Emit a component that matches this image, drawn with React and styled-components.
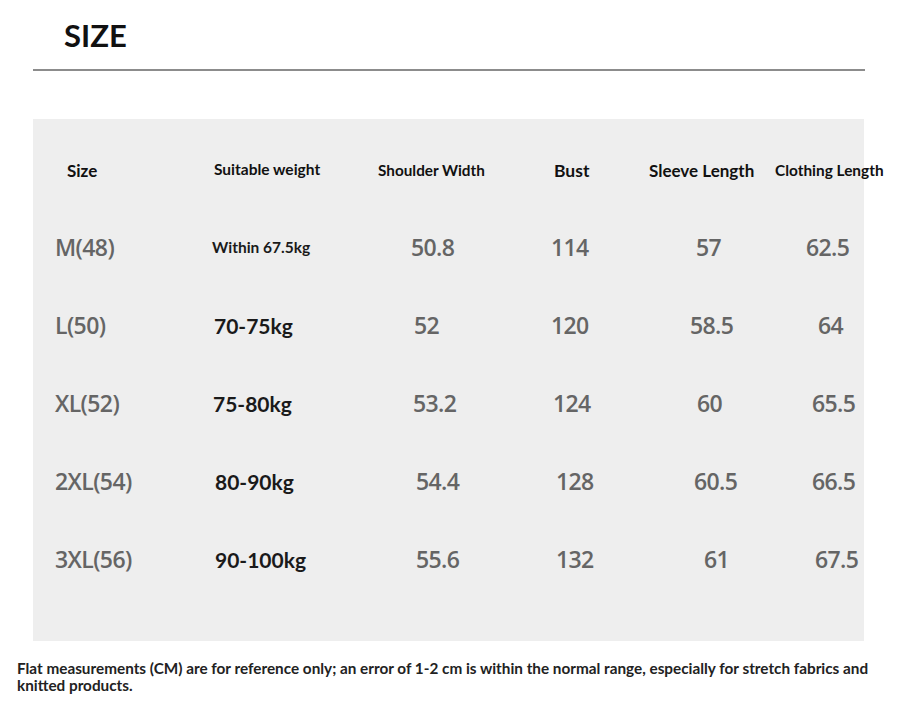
import React from "react";
import styled, {createGlobalStyle} from "styled-components";

const GlobalStyle = createGlobalStyle`
  body {
    margin: 0;
    background: #ffffff;
    font-family: Lato, "Liberation Sans", sans-serif;
  }
`;

const headers = [
    {text: "Size", dx: 34, size: 17},
    {text: "Suitable weight", dx: 24, size: 15.5, dy: -1},
    {text: "Shoulder Width", dx: 8, size: 15.3},
    {text: "Bust", dx: 24, size: 17.5},
    {text: "Sleeve Length", dx: 9, size: 17},
    {text: "Clothing Length", dx: 5, size: 15.4},
];

const rows = [
    {size: "M(48)", weight: "Within 67.5kg", small: true, values: [["50.8", 41], ["114", 21], ["57", 56], ["62.5", 36]], wx: 22},
    {size: "L(50)", weight: "70-75kg", values: [["52", 44], ["120", 21], ["58.5", 50], ["64", 48]], wx: 24},
    {size: "XL(52)", weight: "75-80kg", values: [["53.2", 43], ["124", 23], ["60", 57], ["65.5", 42]], wx: 23},
    {size: "2XL(54)", weight: "80-90kg", values: [["54.4", 46], ["128", 26], ["60.5", 54], ["66.5", 42]], wx: 25},
    {size: "3XL(56)", weight: "90-100kg", values: [["55.6", 46], ["132", 26], ["61", 64], ["67.5", 45]], wx: 25},
];

function App() {
    return (
        <Page>
            <GlobalStyle/>
            <Title>SIZE</Title>
            <Rule/>
            <Panel>
                <HeadRow>
                    {headers.map((h) => (
                        <HeadCell key={h.text} $dx={h.dx} $size={h.size} $dy={h.dy || 0}>{h.text}</HeadCell>
                    ))}
                </HeadRow>
                {rows.map((r) => (
                    <Row key={r.size}>
                        <ValueCell $dx={22}>{r.size}</ValueCell>
                        <WeightCell $dx={r.wx} $small={r.small}>{r.weight}</WeightCell>
                        {r.values.map(([v, dx], i) => (
                            <ValueCell key={i} $dx={dx}>{v}</ValueCell>
                        ))}
                    </Row>
                ))}
            </Panel>
            <Note>
                Flat measurements (CM) are for reference only; an error of 1-2 cm is within the normal range, especially for stretch fabrics and<br/>
                knitted products.
            </Note>
        </Page>
    )
}

const Page = styled.div`
  width: 897px;
  min-height: 722px;
  display: flex;
  flex-direction: column;
`;

const Title = styled.h1`
  margin: 0;
  padding: 15px 0 0 64px;
  font-size: 31px;
  line-height: 40px;
  font-weight: 700;
  color: #111111;
`;

const Rule = styled.div`
  margin: 14px 0 0 33px;
  width: 832px;
  height: 2px;
  background: #8c8c8c;
`;

const Panel = styled.div`
  margin: 48px 0 0 33px;
  width: 831px;
  height: 522px;
  box-sizing: border-box;
  padding-top: 13px;
  background: #eeeeee;
`;

const grid = `
  display: grid;
  grid-template-columns: 157px 180px 160px 110px 130px 94px;
  align-items: center;
`;

const HeadRow = styled.div`
  ${grid};
  height: 76px;
`;

const Row = styled.div`
  ${grid};
  height: 78px;
`;

const HeadCell = styled.div`
  padding-left: ${p => p.$dx}px;
  position: relative;
  top: ${p => p.$dy}px;
  font-size: ${p => p.$size}px;
  font-weight: 700;
  color: #111111;
  white-space: nowrap;
`;

const ValueCell = styled.div`
  padding-left: ${p => p.$dx}px;
  font-family: "Open Sans", "Noto Sans", sans-serif;
  font-size: 23px;
  font-weight: 600;
  letter-spacing: -0.6px;
  color: #656565;
  white-space: nowrap;
`;

const WeightCell = styled.div`
  padding-left: ${p => p.$dx}px;
  font-size: ${p => p.$small ? 15.5 : 21}px;
  font-weight: 700;
  color: #1a1a1a;
  white-space: nowrap;
`;

const Note = styled.p`
  margin: 19px 0 0 17px;
  font-size: 15.3px;
  line-height: 17px;
  font-weight: 700;
  color: #222222;
  white-space: nowrap;
`;

export default App;
